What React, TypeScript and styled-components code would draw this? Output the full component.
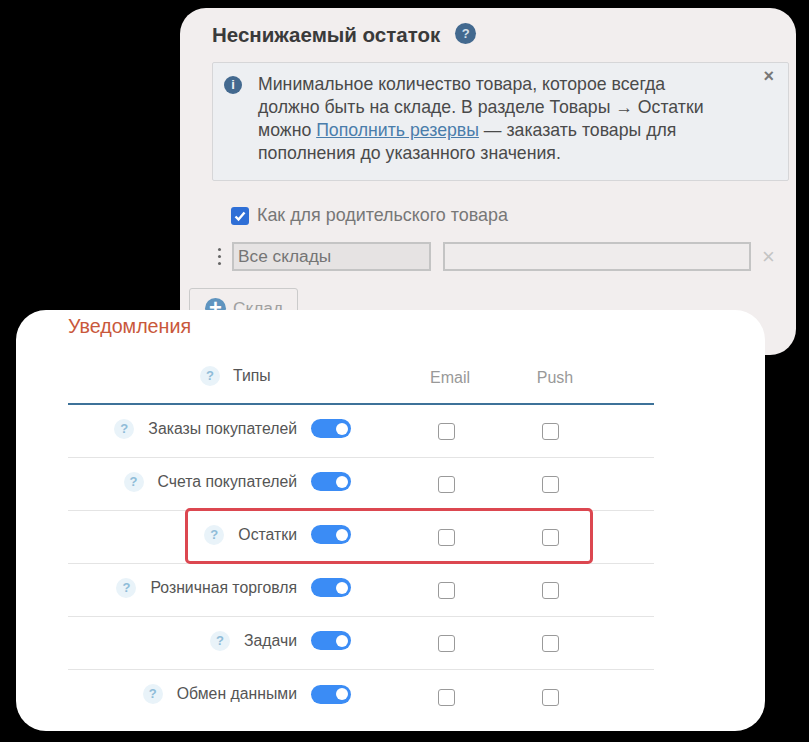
import React from 'react';
import styled, { createGlobalStyle } from 'styled-components';

const Global = createGlobalStyle`
    html, body {
        margin: 0;
        background: #000;
    }
    body {
        font-family: "Liberation Sans", Arial, sans-serif;
    }
`;

const Page = styled.div`
    width: 809px;
    height: 742px;
    box-sizing: border-box;
    padding-top: 8px;
    overflow: hidden;
    background: #000;
`;

const StockCard = styled.section`
    box-sizing: border-box;
    width: 616px;
    height: 347px;
    margin-left: 180px;
    padding: 14px 7px 0 32px;
    background: #f2eeee;
    border-radius: 26px;
    overflow: hidden;
`;

const TitleRow = styled.div`
    display: flex;
    align-items: center;
    gap: 15px;
    height: 26px;
`;

const Title = styled.h2`
    margin: 0;
    font-size: 20.5px;
    font-weight: 700;
    color: #3a3a3a;
`;

const DarkHelp = styled.span`
    width: 21px;
    height: 21px;
    margin-top: -3px;
    border-radius: 50%;
    background: #43698f;
    color: #d5e0ea;
    font-size: 13px;
    font-weight: 700;
    line-height: 21px;
    text-align: center;
`;

const Alert = styled.div`
    box-sizing: border-box;
    position: relative;
    display: flex;
    gap: 16px;
    height: 119px;
    margin-top: 14px;
    padding: 10px 16px 10px 11px;
    width: 577px;
    background: #edeff2;
    border: 1px solid #d6d6d8;
    border-radius: 2px;
    color: #4a4a4a;
    font-size: 17.7px;
    line-height: 23px;
`;

const InfoIcon = styled.span`
    flex: none;
    width: 18px;
    height: 18px;
    margin-top: 3px;
    border-radius: 50%;
    background: #43698f;
    color: #eef1f4;
    font-size: 13px;
    font-weight: 700;
    line-height: 18px;
    text-align: center;
`;

const AlertText = styled.p`
    margin: 0;
    white-space: nowrap;
`;

const AlertLink = styled.a`
    color: #4a7dab;
    text-decoration: underline;
`;

const AlertClose = styled.span`
    position: absolute;
    top: 2px;
    right: 14px;
    color: #777;
    font-size: 18px;
    font-weight: 700;
`;

const ParentRow = styled.label`
    display: flex;
    align-items: center;
    gap: 8px;
    height: 18px;
    margin: 25px 0 0 19px;
    padding-bottom: 1px;
    color: #777;
    font-size: 17.9px;
`;

const BlueCheck = styled.span`
    display: flex;
    flex: none;
    width: 18px;
    height: 18px;
    margin-top: 1px;
    border-radius: 3px;
    background: #2f6fd6;
`;

const StoreRow = styled.div`
    display: flex;
    align-items: center;
    height: 29px;
    margin: 17px 0 0 0;
`;

const Dots = styled.span`
    display: flex;
    flex-direction: column;
    gap: 4px;
    width: 20px;
    padding-left: 6px;
    box-sizing: border-box;

    i {
        width: 3px;
        height: 3px;
        border-radius: 50%;
        background: #666;
    }
`;

const Field = styled.div<{ $width: number; $filled?: boolean }>`
    box-sizing: border-box;
    width: ${p => p.$width}px;
    height: 29px;
    margin-right: 12px;
    padding-left: 4px;
    border: 2px solid #c4c4c4;
    background: ${p => (p.$filled ? '#e6e3e3' : '#efecec')};
    color: #757575;
    font-size: 17.3px;
    line-height: 24px;
`;

const RemoveRow = styled.span`
    margin-left: -1px;
    color: #c4c4c4;
    font-size: 22px;
    font-weight: 400;
`;

const AddButton = styled.button`
    display: flex;
    align-items: center;
    gap: 7px;
    box-sizing: border-box;
    width: 109px;
    height: 40px;
    margin: 17px 0 0 -23px;
    padding: 0 0 0 15px;
    border: 1px solid #cbcbcb;
    border-radius: 3px;
    background: #f2eeee;
    color: #a0a0a0;
    font-family: inherit;
    font-size: 17.3px;
`;

const AddIcon = styled.span`
    width: 21px;
    height: 21px;
    border-radius: 50%;
    background: #5f94bf;
    color: #fff;
    font-size: 22px;
    font-weight: 700;
    line-height: 20px;
    text-align: center;
`;

const NoticeCard = styled.section`
    box-sizing: border-box;
    position: relative;
    width: 749px;
    height: 421px;
    margin: -45px 0 0 16px;
    padding: 6px 0 0 52px;
    background: #fff;
    border-radius: 30px;
`;

const NoticeTitle = styled.h3`
    margin: 0;
    color: #c9583b;
    font-size: 19.7px;
    font-weight: 400;
    line-height: 20px;
`;

const Table = styled.div`
    position: relative;
    width: 586px;
    margin-top: 6px;
`;

const columns = '243px 40px 192px 16px';

const HeadRow = styled.div`
    display: grid;
    grid-template-columns: ${columns};
    align-items: center;
    height: 63px;
    border-bottom: 2px solid #3d7299;
    box-sizing: border-box;
`;

const Row = styled.div`
    display: grid;
    grid-template-columns: ${columns};
    align-items: center;
    height: 53px;
    box-sizing: border-box;
    border-bottom: 1px solid #e4e4e4;

    &:nth-last-child(2) {
        border-bottom: 0;
    }
`;

const LabelCell = styled.div<{ $head?: boolean }>`
    display: flex;
    justify-content: ${p => (p.$head ? 'flex-start' : 'flex-end')};
    align-items: center;
    gap: ${p => (p.$head ? '13px' : '14px')};
    margin: ${p => (p.$head ? '7px 0 0' : '0 0 5px')};
    padding-left: ${p => (p.$head ? '132px' : '0')};
    padding-right: ${p => (p.$head ? '0' : '14px')};
    color: #555;
    font-size: 15.8px;
    white-space: nowrap;
`;

const Help = styled.span`
    width: 20px;
    height: 20px;
    border-radius: 50%;
    background: #e9f3f9;
    color: #8fbcd8;
    font-size: 13px;
    font-weight: 700;
    line-height: 20px;
    text-align: center;
`;

const HeadCell = styled.div<{ $column: number; $shift: number }>`
    grid-column: ${p => p.$column};
    display: flex;
    justify-content: center;
    padding-left: ${p => p.$shift}px;
    margin-top: 10px;
    color: #999;
    font-size: 16px;
`;

const Toggle = styled.span`
    display: flex;
    align-items: center;
    justify-content: flex-end;
    width: 40px;
    height: 19px;
    box-sizing: border-box;
    margin-bottom: 5px;
    padding-right: 3px;
    border-radius: 10px;
    background: #3b8cf5;

    &::after {
        content: '';
        width: 12px;
        height: 12px;
        border-radius: 50%;
        background: #fff;
    }
`;

const CheckCell = styled.div`
    display: flex;
    justify-content: center;
    margin-top: 1px;
`;

const Check = styled.span`
    flex: none;
    box-sizing: border-box;
    width: 17px;
    height: 17px;
    margin-left: -1px;
    border: 1.5px solid #9a9a9a;
    border-radius: 3px;
    background: #fff;
`;

const Highlight = styled.div`
    position: absolute;
    left: 117px;
    top: 166px;
    width: 408px;
    height: 56px;
    box-sizing: border-box;
    border: 3px solid #dc4750;
    border-radius: 5px;
    pointer-events: none;
`;

const rows = [
    'Заказы покупателей',
    'Счета покупателей',
    'Остатки',
    'Розничная торговля',
    'Задачи',
    'Обмен данными',
];

export default function App() {
    return (
        <Page>
            <Global />
            <StockCard>
                <TitleRow>
                    <Title>Неснижаемый остаток</Title>
                    <DarkHelp>?</DarkHelp>
                </TitleRow>
                <Alert>
                    <InfoIcon>i</InfoIcon>
                    <AlertText>
                        Минимальное количество товара, которое всегда
                        <br />
                        должно быть на складе. В разделе Товары → Остатки
                        <br />
                        можно <AlertLink>Пополнить резервы</AlertLink> — заказать товары для
                        <br />
                        пополнения до указанного значения.
                    </AlertText>
                    <AlertClose>×</AlertClose>
                </Alert>
                <ParentRow>
                    <BlueCheck>
                        <svg width="18" height="18" viewBox="0 0 18 18" fill="none">
                            <path d="M4.5 9.5l3 3 6-7" stroke="#fff" strokeWidth="2.4" />
                        </svg>
                    </BlueCheck>
                    Как для родительского товара
                </ParentRow>
                <StoreRow>
                    <Dots>
                        <i />
                        <i />
                        <i />
                    </Dots>
                    <Field $width={199} $filled>
                        Все склады
                    </Field>
                    <Field $width={308} />
                    <RemoveRow>×</RemoveRow>
                </StoreRow>
                <AddButton>
                    <AddIcon>+</AddIcon>
                    Склад
                </AddButton>
            </StockCard>
            <NoticeCard>
                <NoticeTitle>Уведомления</NoticeTitle>
                <Table>
                    <HeadRow>
                        <LabelCell $head>
                            <Help>?</Help>
                            Типы
                        </LabelCell>
                        <HeadCell $column={3} $shift={6}>
                            Email
                        </HeadCell>
                        <HeadCell $column={4} $shift={8}>
                            Push
                        </HeadCell>
                    </HeadRow>
                    {rows.map(name => (
                        <Row key={name}>
                            <LabelCell>
                                <Help>?</Help>
                                {name}
                            </LabelCell>
                            <Toggle />
                            <CheckCell>
                                <Check />
                            </CheckCell>
                            <CheckCell>
                                <Check />
                            </CheckCell>
                        </Row>
                    ))}
                    <Highlight />
                </Table>
            </NoticeCard>
        </Page>
    );
}
